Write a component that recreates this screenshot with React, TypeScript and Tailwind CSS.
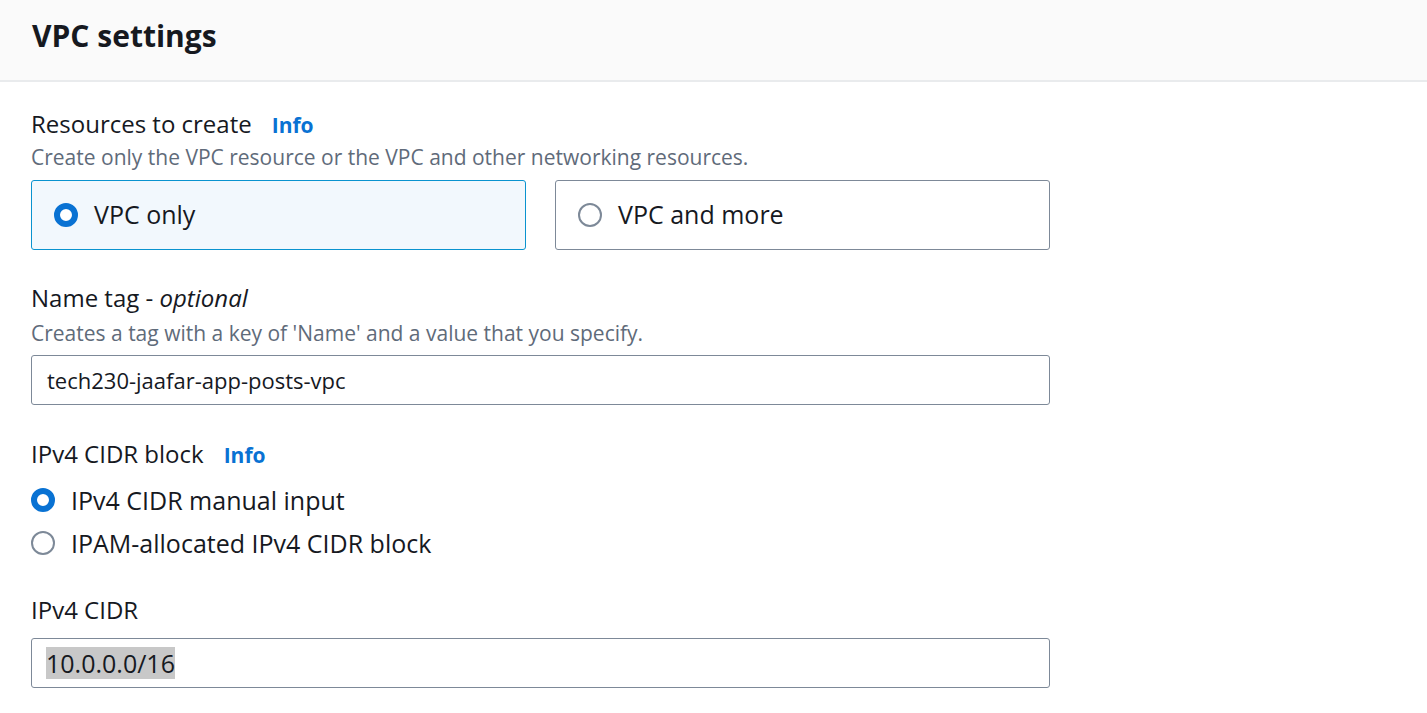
import React from "react";

const font = { fontFamily: '"Open Sans", "Noto Sans", sans-serif' };

const Radio = ({ checked }: { checked?: boolean }) =>
  checked ? (
    <span className="inline-block w-[24px] h-[24px] rounded-full border-[6px] border-[#0972d3] bg-white shrink-0" />
  ) : (
    <span className="inline-block w-[24px] h-[24px] rounded-full border-2 border-[#7d8998] bg-white shrink-0" />
  );

const Info = () => <span className="text-[#0972d3] font-bold text-[21px] ml-[20px]">Info</span>;

export default function App() {
  return (
    <div className="w-[1427px] h-[713px] bg-white overflow-hidden text-[#16191f]" style={font}>
      <div className="h-[82px] bg-[#fafafa] border-b-2 border-[#e9ebed] px-[32px] pb-[10px] flex items-center">
        <h2 className="text-[30px] font-bold text-[#16191f]">VPC settings</h2>
      </div>

      <div className="px-[31px] w-[1081px]">
        <div className="pt-[26px]">
          <div className="text-[24px] leading-[32px] flex items-baseline">
            Resources to create <Info />
          </div>
          <div className="text-[21px] leading-[28px] text-[#5f6b7a] mt-[2px]">
            Create only the VPC resource or the VPC and other networking resources.
          </div>
          <div className="grid grid-cols-2 gap-[29px] mt-[9px]">
            <div className="h-[70px] rounded-[3px] border border-[#0a93cf] bg-[#f2f8fd] flex items-center px-[22px] gap-[16px]">
              <Radio checked />
              <span className="text-[25px]">VPC only</span>
            </div>
            <div className="h-[70px] rounded-[3px] border border-[#7d8998] bg-white flex items-center px-[22px] gap-[16px]">
              <Radio />
              <span className="text-[25px]">VPC and more</span>
            </div>
          </div>
        </div>

        <div className="pt-[32px]">
          <div className="text-[24px] leading-[32px]">
            Name tag - <i>optional</i>
          </div>
          <div className="text-[21px] leading-[28px] text-[#5f6b7a] mt-[5px]">
            Creates a tag with a key of 'Name' and a value that you specify.
          </div>
          <div className="h-[50px] mt-[8px] rounded-[3px] border border-[#7d8998] flex items-center px-[15px] text-[22px]">
            tech230-jaafar-app-posts-vpc
          </div>
        </div>

        <div className="pt-[33px]">
          <div className="text-[24px] leading-[32px] flex items-baseline">
            IPv4 CIDR block <Info />
          </div>
          <div className="mt-[13px] flex flex-col gap-[11px]">
            <label className="flex items-center gap-[16px] text-[25px] leading-[32px]">
              <Radio checked />
              IPv4 CIDR manual input
            </label>
            <label className="flex items-center gap-[16px] text-[25px] leading-[32px]">
              <Radio />
              IPAM-allocated IPv4 CIDR block
            </label>
          </div>
        </div>

        <div className="pt-[35px]">
          <div className="text-[24px] leading-[32px]">IPv4 CIDR</div>
          <div className="h-[50px] mt-[12px] rounded-[3px] border border-[#7d8998] flex items-center px-[14px] text-[25px]">
            <span className="bg-[#c8c8c8] leading-[32px]">10.0.0.0/16</span>
          </div>
        </div>
      </div>
    </div>
  );
}
